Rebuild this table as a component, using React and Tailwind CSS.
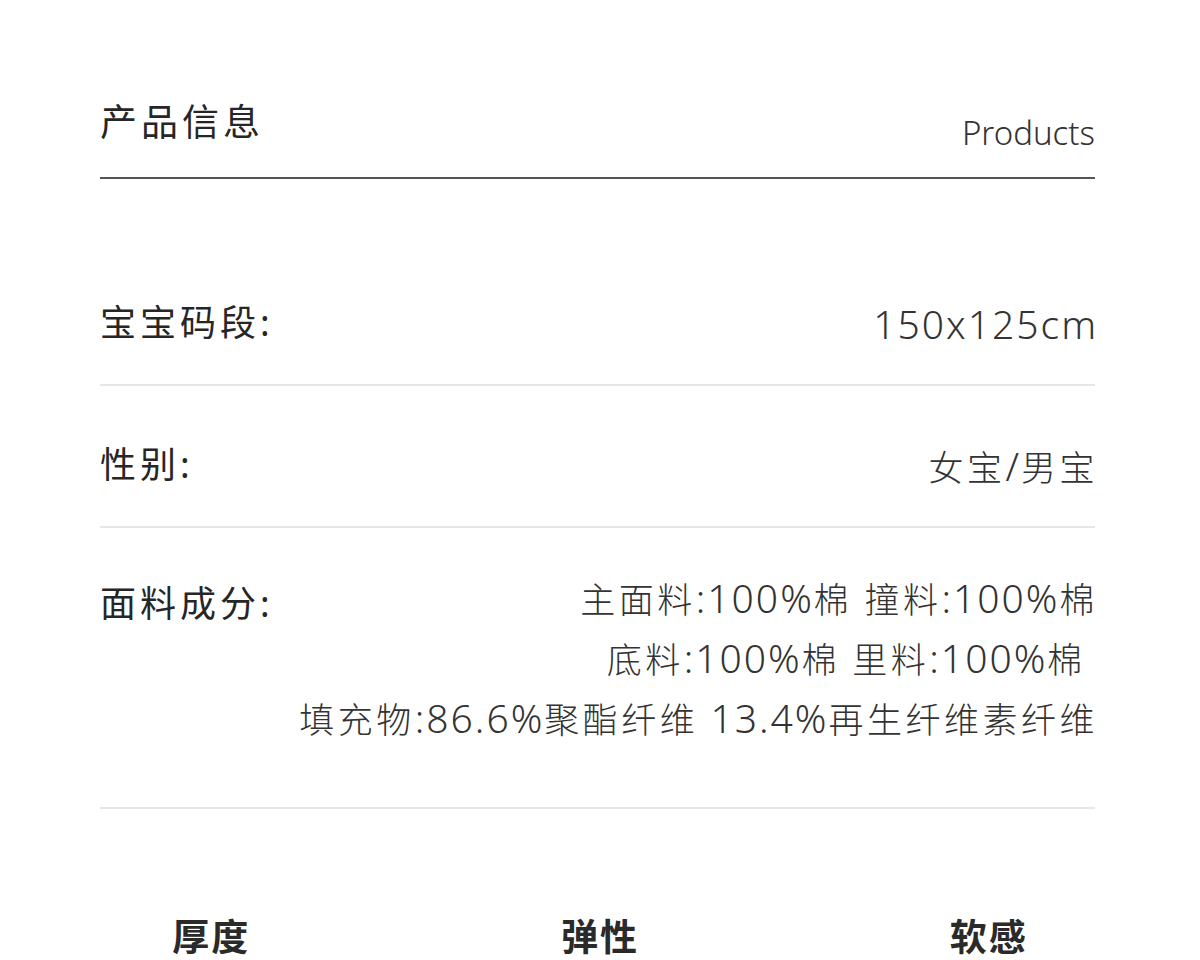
import React from 'react';

const rows = [
  { label: '宝宝码段:', values: ['150x125cm'] },
  { label: '性别:', values: ['女宝/男宝'] },
  {
    label: '面料成分:',
    values: ['主面料:100%棉 撞料:100%棉', '底料:100%棉 里料:100%棉 ', '填充物:86.6%聚酯纤维 13.4%再生纤维素纤维'],
  },
];

// Latin runs are drawn a little larger so the digits stand as tall as the CJK glyphs
function Mixed({ text }) {
  const parts = text.split(/([\u0000-\u00ff]+)/).filter(Boolean);
  return parts.map((p, i) =>
    /^[\u0000-\u00ff]+$/.test(p) ? (
      <span key={i} className="text-[39px] leading-none tracking-[2px]">
        {p}
      </span>
    ) : (
      <span key={i}>{p}</span>
    )
  );
}

export default function App() {
  return (
    <div
      className="w-[1200px] min-h-[1000px] bg-white text-[#333333]"
      style={{ fontFamily: '"Noto Sans", "Noto Sans CJK SC", sans-serif' }}
    >
      {/* Header */}
      <div className="pl-[100px] pr-[105px] pt-[97px]">
        <div className="flex items-end justify-between pb-[30px] border-b-2 border-[#555555]">
          <h1 className="text-[37px] leading-[50px] font-normal tracking-[4px] text-[#262626]">产品信息</h1>
          <span className="text-[33px] leading-[40px] font-light mb-[-6px]">Products</span>
        </div>
      </div>

      {/* Spec rows */}
      <div className="pl-[100px] pr-[105px] pt-[65px]">
        {rows.map((row, idx) => {
          const multi = row.values.length > 1;
          return (
            <div
              key={row.label}
              className={`flex justify-between items-start border-b-2 border-[#e6e6e6] ${
                idx === 0 ? 'pt-[60px] pb-[42px]' : multi ? 'pt-[57px] pb-[57px]' : 'pt-[60px] pb-[42px]'
              }`}
            >
              <div className="text-[36px] leading-[38px] font-normal tracking-[4px] text-[#262626] shrink-0 whitespace-nowrap">
                {row.label}
              </div>
              <div className={`text-right ${multi ? 'mt-[-15px]' : 'h-[38px]'}`}>
                {row.values.map((v) => (
                  <div
                    key={v}
                    className={`text-[35px] font-light tracking-[3.5px] mr-[-3px] whitespace-pre ${
                      multi ? 'h-[60px] leading-[60px]' : 'h-[38px] leading-[38px]'
                    }`}
                  >
                    <Mixed text={v} />
                  </div>
                ))}
              </div>
            </div>
          );
        })}
      </div>

      {/* Feature headings */}
      <div className="grid grid-cols-3 px-[17px] pt-[109px]">
        {['厚度', '弹性', '软感'].map((t) => (
          <div key={t} className="text-center text-[37px] leading-[37px] font-bold tracking-[2px] text-[#2a2a2a]">
            {t}
          </div>
        ))}
      </div>
    </div>
  );
}
